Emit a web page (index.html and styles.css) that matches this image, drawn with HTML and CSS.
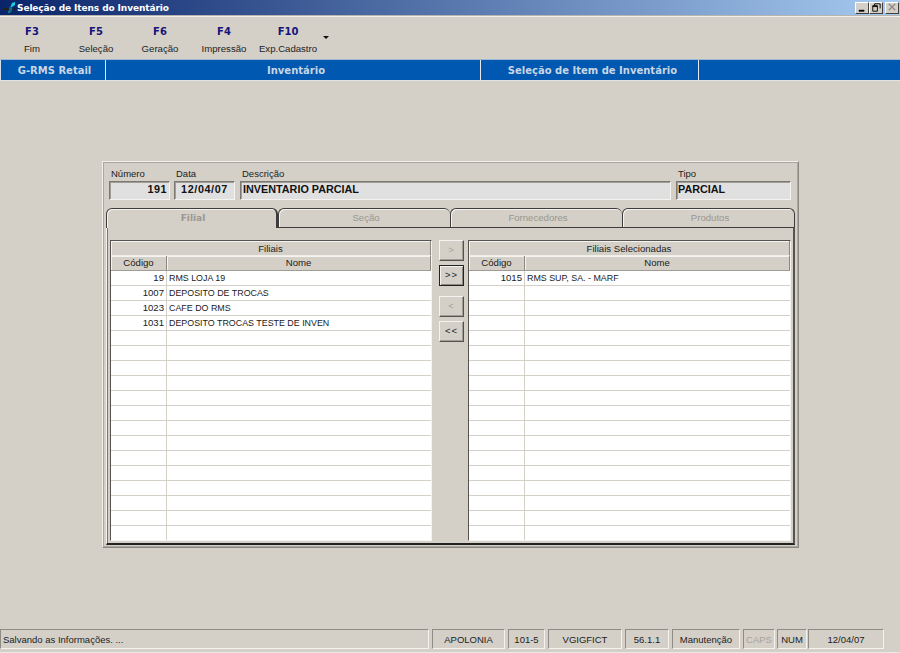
FILE: index.html
```html
<!DOCTYPE html>
<html lang="pt">
<head>
<meta charset="utf-8">
<title>Seleção de Itens do Inventário</title>
<link rel="stylesheet" href="styles.css">
</head>
<body>
<div class="window">
  <header class="titlebar">
    <svg class="app-icon" width="14" height="14" viewBox="0 0 14 14"><path d="M5 12 L9 2 L12 1 L12 4 L9 6 L8 11 Z" fill="#19d0e0"/><path d="M5 12 L8 11 L9 6 L7 5 Z" fill="#0e6f80"/><rect x="1" y="7" width="5" height="2" fill="#222"/><rect x="10" y="7" width="3" height="2" fill="#222"/></svg>
    <span class="title-text">Seleção de Itens do Inventário</span>
    <div class="win-buttons">
      <span class="win-btn"><svg width="13" height="11" viewBox="0 0 13 11"><rect x="3" y="8" width="6" height="2" fill="#000"/></svg></span>
      <span class="win-btn"><svg width="13" height="11" viewBox="0 0 13 11"><path d="M5 1.5h6v5M5 1.5v2M3 3.5h5v6H3z M3 4.5h5" fill="none" stroke="#000"/></svg></span>
      <span class="win-btn win-btn-gap"><svg width="13" height="11" viewBox="0 0 13 11"><path d="M3 1.5l7 7M10 1.5l-7 7" stroke="#8d8a85" stroke-width="1.4"/></svg></span>
    </div>
  </header>
  <nav class="toolbar">
    <div class="tool"><b>F3</b><span>Fim</span></div>
    <div class="tool"><b>F5</b><span>Seleção</span></div>
    <div class="tool"><b>F6</b><span>Geração</span></div>
    <div class="tool"><b>F4</b><span>Impressão</span></div>
    <div class="tool"><b>F10</b><span>Exp.Cadastro</span></div>
    <i class="tool-arrow"></i>
  </nav>
  <div class="crumbs">
    <div class="crumb c1">G-RMS Retail</div>
    <div class="crumb c2">Inventário</div>
    <div class="crumb c3">Seleção de Item de Inventário</div>
  </div>
  <main class="content">
    <section class="dialog">
      <div class="fields">
        <label class="field f-num"><span>Número</span><output class="input right">191</output></label>
        <label class="field f-date"><span>Data</span><output class="input center date">12/04/07</output></label>
        <label class="field f-desc"><span>Descrição</span><output class="input">INVENTARIO PARCIAL</output></label>
        <label class="field f-tipo"><span>Tipo</span><output class="input">PARCIAL</output></label>
      </div>
      <div class="tabs">
        <div class="tab active">Filial</div>
        <div class="tab">Seção</div>
        <div class="tab">Fornecedores</div>
        <div class="tab">Produtos</div>
      </div>
      <div class="tab-body">
        <div class="grid">
          <div class="grid-title">Filiais</div>
          <div class="row head"><div class="cod">Código</div><div class="nome">Nome</div></div>
          <div class="row"><div class="cod">19</div><div class="nome">RMS LOJA 19</div></div>
          <div class="row"><div class="cod">1007</div><div class="nome">DEPOSITO DE TROCAS</div></div>
          <div class="row"><div class="cod">1023</div><div class="nome">CAFE DO RMS</div></div>
          <div class="row"><div class="cod">1031</div><div class="nome">DEPOSITO TROCAS TESTE DE INVEN</div></div>
          <div class="row"><div class="cod"></div><div class="nome"></div></div>
          <div class="row"><div class="cod"></div><div class="nome"></div></div>
          <div class="row"><div class="cod"></div><div class="nome"></div></div>
          <div class="row"><div class="cod"></div><div class="nome"></div></div>
          <div class="row"><div class="cod"></div><div class="nome"></div></div>
          <div class="row"><div class="cod"></div><div class="nome"></div></div>
          <div class="row"><div class="cod"></div><div class="nome"></div></div>
          <div class="row"><div class="cod"></div><div class="nome"></div></div>
          <div class="row"><div class="cod"></div><div class="nome"></div></div>
          <div class="row"><div class="cod"></div><div class="nome"></div></div>
          <div class="row"><div class="cod"></div><div class="nome"></div></div>
          <div class="row"><div class="cod"></div><div class="nome"></div></div>
          <div class="row"><div class="cod"></div><div class="nome"></div></div>
          <div class="row"><div class="cod"></div><div class="nome"></div></div>
        </div>
        <div class="mover">
          <div class="btn disabled">&gt;</div>
          <div class="btn default">&gt;&gt;</div>
          <div class="btn disabled second">&lt;</div>
          <div class="btn">&lt;&lt;</div>
        </div>
        <div class="grid grid-right">
          <div class="grid-title">Filiais Selecionadas</div>
          <div class="row head"><div class="cod">Código</div><div class="nome">Nome</div></div>
          <div class="row"><div class="cod">1015</div><div class="nome">RMS SUP, SA. - MARF</div></div>
          <div class="row"><div class="cod"></div><div class="nome"></div></div>
          <div class="row"><div class="cod"></div><div class="nome"></div></div>
          <div class="row"><div class="cod"></div><div class="nome"></div></div>
          <div class="row"><div class="cod"></div><div class="nome"></div></div>
          <div class="row"><div class="cod"></div><div class="nome"></div></div>
          <div class="row"><div class="cod"></div><div class="nome"></div></div>
          <div class="row"><div class="cod"></div><div class="nome"></div></div>
          <div class="row"><div class="cod"></div><div class="nome"></div></div>
          <div class="row"><div class="cod"></div><div class="nome"></div></div>
          <div class="row"><div class="cod"></div><div class="nome"></div></div>
          <div class="row"><div class="cod"></div><div class="nome"></div></div>
          <div class="row"><div class="cod"></div><div class="nome"></div></div>
          <div class="row"><div class="cod"></div><div class="nome"></div></div>
          <div class="row"><div class="cod"></div><div class="nome"></div></div>
          <div class="row"><div class="cod"></div><div class="nome"></div></div>
          <div class="row"><div class="cod"></div><div class="nome"></div></div>
          <div class="row"><div class="cod"></div><div class="nome"></div></div>
        </div>
      </div>
    </section>
  </main>
  <footer class="status">
    <div class="cell s-msg">Salvando as Informações. ...</div>
    <div class="cell s-a">APOLONIA</div>
    <div class="cell s-b">101-5</div>
    <div class="cell s-c">VGIGFICT</div>
    <div class="cell s-d">56.1.1</div>
    <div class="cell s-e">Manutenção</div>
    <div class="cell s-f off">CAPS</div>
    <div class="cell s-g">NUM</div>
    <div class="cell s-h">12/04/07</div>
  </footer>
</div>
</body>
</html>
```
FILE: styles.css
```css
* { box-sizing: border-box; }
html, body { margin: 0; padding: 0; }
body { width: 900px; height: 653px; overflow: hidden; background: #d4d0c8; font-family: "Liberation Sans", Arial, sans-serif; font-size: 10px; color: #111; }
.window { display: flex; flex-direction: column; height: 653px; }

.titlebar { height: 16px; flex: none; display: flex; align-items: center; background: linear-gradient(90deg, #0a246a, #a6caf0); border-bottom: 1px solid #b8b5ae; padding-left: 3px; box-shadow: 0 1px 0 #b4b1aa; }
.app-icon { flex: none; }
.title-text { color: #fff; font-family: "DejaVu Sans", sans-serif; font-weight: bold; font-size: 9px; letter-spacing: -0.1px; }
.win-buttons { margin-left: auto; display: flex; padding-right: 1px; }
.win-btn { width: 14px; height: 12px; background: #d4d0c8; border: 1px solid; border-color: #fff #404040 #404040 #fff; display: flex; align-items: center; justify-content: center; overflow: hidden; }
.win-btn-gap { margin-left: 2px; }

.toolbar { height: 43px; flex: none; display: flex; align-items: flex-start; border-top: 1px solid #f3f1ec; padding-top: 9px; position: relative; }
.tool { width: 64px; display: flex; flex-direction: column; align-items: center; line-height: 12px; }
.tool b { color: #14147a; font-family: "DejaVu Sans", sans-serif; font-size: 10px; margin-bottom: 5px; }
.tool span { color: #222; font-size: 9.6px; white-space: nowrap; }
.tool-arrow { position: absolute; left: 323px; top: 19px; border: 3px solid transparent; border-top: 3px solid #111; border-bottom: 0; }

.crumbs { height: 22px; flex: none; display: flex; background: #0058b0; border-top: 1px solid #9db8d4; border-bottom: 1px solid #e2e2e2; }
.crumb { color: #c9d6e6; font-weight: bold; font-family: "DejaVu Sans", sans-serif; font-size: 10px; line-height: 22px; text-align: center; border-right: 1px solid #e4e8ee; white-space: nowrap; }
.c1 { width: 106px; border-left: 1px solid #d6e0ea; padding-left: 3px; }
.c2 { width: 375px; padding-left: 6px; }
.c3 { width: 218px; padding-left: 6px; }

.content { flex: 1; padding: 80px 0 0 102px; }
.dialog { width: 697px; height: 387px; border: 1px solid; border-color: #f2f0eb #8b8882 #8b8882 #f2f0eb; outline: 1px solid #aaa7a0; outline-offset: -2px; padding: 5px 3px 0 3px; position: relative; box-shadow: inset -1px -1px 0 #8b8882; }

.fields { display: flex; height: 40px; padding-left: 3px; }
.field { display: flex; flex-direction: column; font-size: 9.5px; color: #222; line-height: 13px; }
.field span { padding-left: 2px; }
.input { height: 19px; margin-top: 1px; background: #e0e0e0; border: 1px solid; border-color: #7b7872 #f4f3ef #f4f3ef #7b7872; box-shadow: inset 1px 1px 0 #a09d96; font-family: "Liberation Sans", sans-serif; font-weight: bold; font-size: 10.8px; color: #111; line-height: 15px; padding: 0 2px; white-space: nowrap; }
.right { text-align: right; letter-spacing: 0.5px; }
.center { text-align: center; }
.date { letter-spacing: 0.6px; padding: 0; }
.f-num { width: 61px; margin-right: 4px; }
.f-date { width: 61px; margin-right: 5px; }
.f-desc { width: 431px; margin-right: 5px; }
.f-tipo { width: 115px; }
.f-tipo .input { padding-left: 1px; }

.tabs { display: flex; height: 20px; margin-top: 1px; position: relative; z-index: 1; }
.tab { width: 172px; height: 19px; text-align: center; color: #9a9791; line-height: 17px; font-size: 9.6px; padding-left: 3px; border: 1px solid #3d3d3d; border-bottom: 0; border-right: 0; border-radius: 6px 6px 0 0; box-shadow: inset 1px 1px 0 #f4f3ef; }
.tab:last-child { border-right: 1px solid #3d3d3d; width: 173px; }
.tab.active { height: 20px; width: 172px; font-weight: bold; background: #d4d0c8; font-family: "DejaVu Sans", sans-serif; font-size: 9px; border-right: 2px solid #3d3d3d; line-height: 19px; }
.tab-body { width: 689px; height: 318px; margin-top: -1px; border: 1px solid #3d3d3d; border-left-color: #f4f3ef; border-right: 2px solid #55534e; border-bottom: 2px solid #222; padding: 12px 0 0 3px; display: flex; box-shadow: inset 1px 0 0 #777; }

.grid { width: 322px; height: 301px; border: 1px solid; border-color: #54534f #f4f3ef #f4f3ef #54534f; background: #fff; flex: none; overflow: hidden; }
.grid-right { width: 323px; }
.grid-title { height: 15px; line-height: 15px; text-align: center; background: #d4d0c8; border-bottom: 1px solid #f0eee9; border-right: 1px solid #8b8882; font-size: 9.6px; color: #222; box-shadow: inset 1px 1px 0 #f4f3ef; }
.row { display: flex; height: 15px; line-height: 14px; border-bottom: 1px solid #d4d0c8; color: #1a1a1a; font-size: 9.6px; }
.row .cod { width: 56px; flex: none; text-align: right; padding-right: 2px; border-right: 1px solid #d4d0c8; }
.row .nome { flex: 1; padding-left: 2px; font-size: 8.9px; white-space: nowrap; overflow: hidden; }
.row.head { height: 15px; line-height: 14px; background: #d4d0c8; border-bottom: 1px solid #a09d96; }
.row.head .cod { text-align: center; padding: 0; border-right: 1px solid #8b8882; box-shadow: inset 1px 1px 0 #f4f3ef; }
.row.head .nome { text-align: center; padding: 0; font-size: 9.6px; border-right: 1px solid #8b8882; box-shadow: inset 1px 1px 0 #f4f3ef; }

.mover { width: 36px; flex: none; padding: 0 0 0 7px; display: flex; flex-direction: column; gap: 4px; }
.btn { width: 25px; height: 21px; flex: none; text-align: center; line-height: 18px; font-size: 9.5px; letter-spacing: 1px; color: #222; border: 1px solid; border-color: #f4f3ef #55534e #55534e #f4f3ef; background: #d4d0c8; box-shadow: inset -1px -1px 0 #a09d96; }
.btn.disabled { color: #a5a29b; }
.btn.default { border: 1px solid #222; box-shadow: inset 1px 1px 0 #f4f3ef, inset -1px -1px 0 #8b8882; }
.btn.second { margin-top: 6px; }

.status { height: 24px; flex: none; display: flex; gap: 3px; padding-bottom: 3px; border-bottom: 1px solid #ece9e3; margin-top: auto; }
.cell { border: 1px solid; border-color: #8f8c86 #f4f3ef #f4f3ef #8f8c86; line-height: 20px; text-align: center; font-size: 9.5px; color: #222; white-space: nowrap; }
.s-msg { width: 429px; text-align: left; padding-left: 2px; }
.s-a { width: 73px; }
.s-b { width: 37px; }
.s-c { width: 74px; }
.s-d { width: 44px; }
.s-e { width: 68px; }
.s-f { width: 32px; }
.s-g { width: 30px; margin-left: -1px; }
.s-h { width: 76px; margin-left: -2px; }
.off { color: #a5a29b; }
```
